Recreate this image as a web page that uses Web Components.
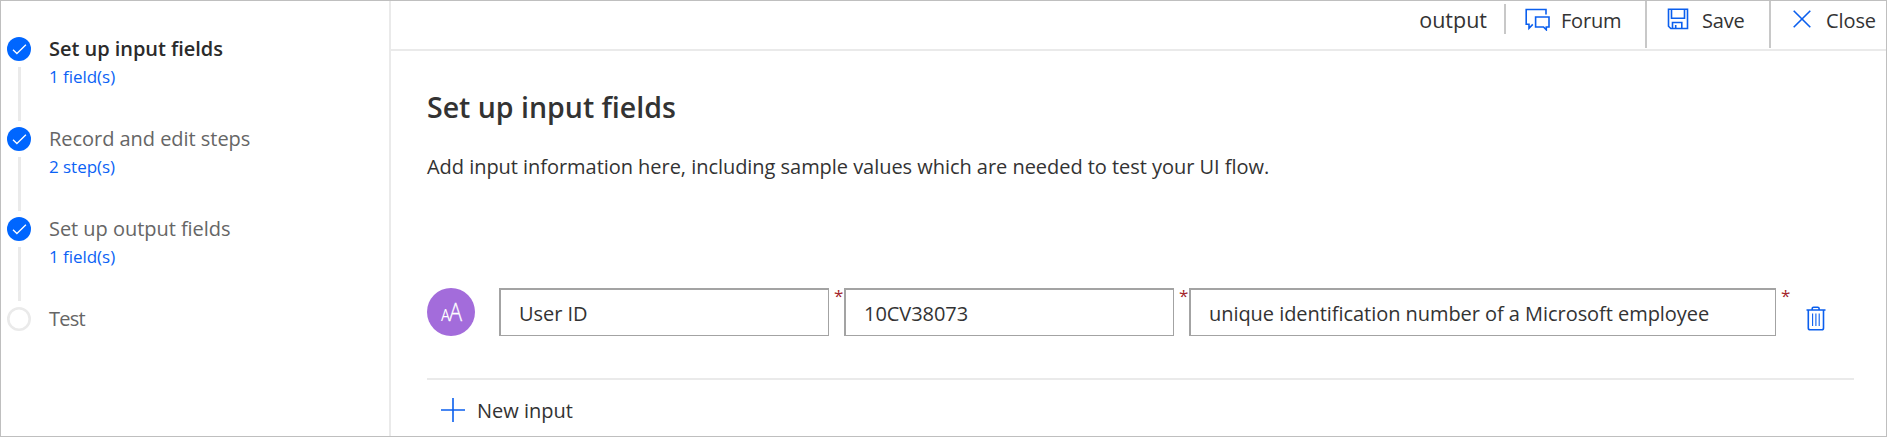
<!DOCTYPE html>
<html lang="en">
<head>
<meta charset="utf-8">
<title>Set up input fields</title>
<style>
html, body { margin: 0; height: 100%; }
body { font: 400 20px/30px "Open Sans", "Noto Sans", sans-serif; color: #333; background: #fff; overflow: hidden; }
</style>
</head>
<body>
<flow-app></flow-app>
<script>
const define = (name, html) => {
  const tpl = document.createElement('template');
  tpl.innerHTML = html;
  customElements.define(name, class extends HTMLElement {
    constructor() {
      super();
      this.attachShadow({ mode: 'open' }).append(tpl.content.cloneNode(true));
    }
  });
};

const ICONS = {
  check: [24, 24, '<circle cx="12" cy="12" r="12" fill="#06f"/><path d="M6 12.7l3.9 3.8 9-8.7" stroke="#fff" stroke-width="1.3"/>'],
  empty: [24, 24, '<circle cx="12" cy="12" r="10.7" stroke="#eaeaea" stroke-width="2.6"/>'],
  forum: [25, 23, '<path d="M21 6.5V1.5H1.2V16.2H4V20.3L7.8 16.4M10.6 9H24V19H21.3V21.8L18.5 19H10.6Z"/>'],
  save: [22, 22, '<path d="M1.5 1.2H20.5V20.5H3.8L1.5 18.2ZM4.5 1.2V10.3H17.5V1.2M5.5 20.5V14.5H14.8V20.5M8.7 20.5V17"/>'],
  close: [18, 18, '<path d="M.7 .7l16.6 16.6M17.3 .7L.7 17.3"/>'],
  plus: [24, 24, '<path d="M12 0V24M0 12H24" stroke-width="1.6"/>'],
  trash: [20, 25, '<path d="M.5 4H19.5M6.2 4V2.6Q6.2 1.2 7.6 1.2H11.7Q13.1 1.2 13.1 2.6V4M2.3 4V21.9Q2.3 23.8 4.2 23.8H15.8Q17.5 23.8 17.5 21.9V4"/><path d="M6.6 7.5V20M9.9 7.5V20M13.2 7.5V20" stroke-width="1.1"/>'],
  text: [48, 48, '<circle cx="24" cy="24" r="24" fill="#a36cdb"/><g fill="#fff" stroke="none" font-family="Open Sans, sans-serif" font-weight="300"><text x="14" y="33" font-size="16" font-weight="400" textLength="9" lengthAdjust="spacingAndGlyphs">A</text><text x="22" y="33" font-size="25" textLength="13" lengthAdjust="spacingAndGlyphs" stroke="#fff" stroke-width=".3">A</text></g>']
};
customElements.define('ui-icon', class extends HTMLElement {
  connectedCallback() {
    if (this.shadowRoot) return;
    const [w, h, body] = ICONS[this.getAttribute('name')];
    this.attachShadow({ mode: 'open' }).innerHTML =
      `<style>:host{display:block;flex:none;width:${w}px;height:${h}px}svg{display:block}</style>
       <svg width="${w}" height="${h}" viewBox="0 0 ${w} ${h}" fill="none" stroke="#0b5fee" stroke-width="1.6">${body.replace(/<circle(?![^>]*stroke)/g, '<circle stroke="none"')}</svg>`;
  }
});

define('nav-step', `
<style>
:host { display: flex; height: 90px; color: #666; }
:host([active]) { color: #2b2b2b; font-weight: 600; }
.rail { width: 24px; flex: none; display: flex; flex-direction: column; align-items: center; padding-top: 3px; }
.rail i { width: 3px; height: 54px; margin: 6px 0 0 1px; background: #eaeaea; }
:host([last]) .rail i { display: none; }
.label { margin-left: 18px; white-space: nowrap; letter-spacing: -.04px; }
:host([last]) .label { letter-spacing: -.8px; }
.sub { margin-top: 1px; font: 400 17px/24px "Open Sans", sans-serif; color: #0b62f5; }
</style>
<div class="rail"><slot name="mark"></slot><i></i></div>
<div class="label"><slot></slot><div class="sub"><slot name="sub"></slot></div></div>`);

define('step-nav', `
<style>
:host { display: block; box-sizing: border-box; width: 390px; flex: none; padding: 33px 0 0 6px; border-right: 2px solid #eaeaea; }
</style>
<nav>
  <nav-step active><ui-icon slot="mark" name="check"></ui-icon>Set up input fields<span slot="sub">1 field(s)</span></nav-step>
  <nav-step><ui-icon slot="mark" name="check"></ui-icon>Record and edit steps<span slot="sub">2 step(s)</span></nav-step>
  <nav-step><ui-icon slot="mark" name="check"></ui-icon>Set up output fields<span slot="sub">1 field(s)</span></nav-step>
  <nav-step last><ui-icon slot="mark" name="empty"></ui-icon>Test</nav-step>
</nav>`);

define('command-bar', `
<style>
:host { display: flex; justify-content: flex-end; align-items: flex-start; height: 48px; border-bottom: 2px solid #eaeaea; white-space: nowrap; }
.name { font-size: 21.5px; margin: 4px 17px 0 0; }
.sep { width: 2px; height: 30px; margin-top: 3px; background: #c8c8c8; }
.cmd { display: flex; box-sizing: border-box; height: 47px; padding-top: 5px; }
.forum { width: 139px; padding-left: 19px; letter-spacing: -.2px; }
.forum ui-icon { margin: 2px 11px 0 0; }
.save { width: 124px; padding-left: 20px; border-left: 2px solid #c8c8c8; letter-spacing: -.2px; }
.save ui-icon { margin: 2px 13px 0 0; }
.close { width: 117px; padding-left: 22px; border-left: 2px solid #c8c8c8; letter-spacing: -.1px; }
.close ui-icon { margin: 4px 15px 0 0; }
</style>
<span class="name">output</span><span class="sep"></span>
<div class="cmd forum"><ui-icon name="forum"></ui-icon>Forum</div>
<div class="cmd save"><ui-icon name="save"></ui-icon>Save</div>
<div class="cmd close"><ui-icon name="close"></ui-icon>Close</div>`);

define('text-field', `
<style>
:host { display: flex; height: 48px; letter-spacing: -.05px; }
.box { flex: 1; box-sizing: border-box; border: solid #a3a3a3; border-width: 2px 1px 1px 2px; padding: 9px 0 0 18px; white-space: nowrap; }
.req { width: 15px; flex: none; box-sizing: border-box; margin-top: -4px; padding-left: 5px; font-size: 17px; line-height: 24px; color: #a4262c; }
</style>
<div class="box"><slot></slot></div><span class="req">*</span>`);

define('input-row', `
<style>
:host { display: flex; }
text-field { width: 345px; }
.kind { margin-right: 24px; }
.wide { width: 602px; }
.del { margin: 18px 0 0 15px; }
</style>
<ui-icon class="kind" name="text"></ui-icon>
<text-field>User ID</text-field>
<text-field>10CV38073</text-field>
<text-field class="wide">unique identification number of a Microsoft employee</text-field>
<ui-icon class="del" name="trash"></ui-icon>`);

define('input-editor', `
<style>
:host { display: block; padding: 36px 32px 0 36px; }
h1 { margin: 0; font-size: 28.5px; line-height: 40px; font-weight: 600; }
p { margin: 25px 0 0; letter-spacing: -.04px; }
input-row { margin-top: 106px; }
.add { display: flex; margin-top: 42px; border-top: 2px solid #eaeaea; padding: 16px 0 0 14px; }
.add ui-icon { margin: 2px 12px 0 0; }
</style>
<h1>Set up input fields</h1>
<p>Add input information here, including sample values which are needed to test your UI flow.</p>
<input-row></input-row>
<div class="add"><ui-icon name="plus"></ui-icon>New input</div>`);

define('flow-app', `
<style>
:host { display: flex; box-sizing: border-box; width: 1887px; height: 437px; border: 1px solid #bfbfbf; overflow: hidden; }
main { flex: 1; min-width: 0; }
</style>
<step-nav></step-nav>
<main><command-bar></command-bar><input-editor></input-editor></main>`);
</script>
</body>
</html>
